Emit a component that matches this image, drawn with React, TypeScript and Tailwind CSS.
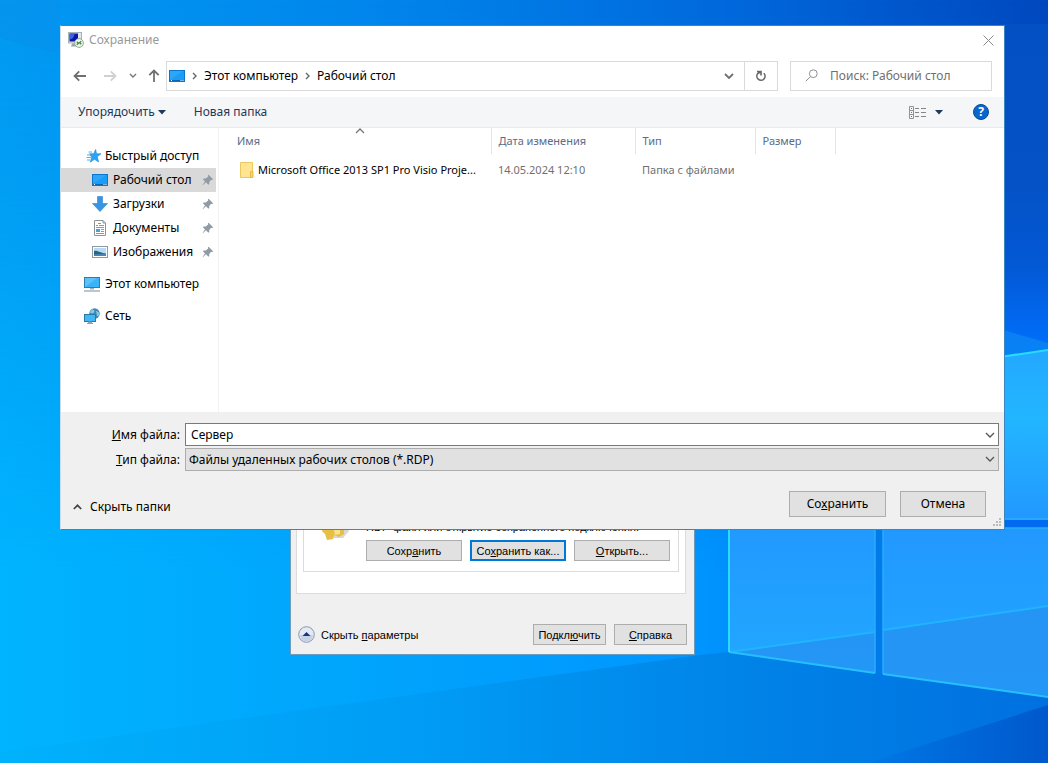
import React, { useState } from "react";

type IconProps = { className?: string };

function Wallpaper() {
  return (
    <svg className="absolute inset-0 h-full w-full" viewBox="0 0 1048 763" preserveAspectRatio="none" aria-hidden="true">
      <defs>
        <linearGradient id="sky" x1="0" y1="0" x2="1" y2="0">
          <stop offset="0" stopColor="#0299f2" />
          <stop offset="0.35" stopColor="#0086ec" />
          <stop offset="0.7" stopColor="#0068dc" />
          <stop offset="1" stopColor="#0048be" />
        </linearGradient>
        <linearGradient id="floor" x1="0" y1="0" x2="1" y2="0">
          <stop offset="0" stopColor="#00b4ff" />
          <stop offset="0.35" stopColor="#00a4fc" />
          <stop offset="0.66" stopColor="#0096ff" />
          <stop offset="0.85" stopColor="#0078f0" />
          <stop offset="1" stopColor="#0064e6" />
        </linearGradient>
        <linearGradient id="fade" x1="0" y1="0" x2="0" y2="1">
          <stop offset="0" stopColor="#000" />
          <stop offset="0.25" stopColor="#333" />
          <stop offset="0.75" stopColor="#fff" />
        </linearGradient>
        <mask id="lower"><rect width="1048" height="763" fill="url(#fade)" /></mask>
        <linearGradient id="edge" x1="0" y1="0" x2="0" y2="1">
          <stop offset="0" stopColor="#034fc4" />
          <stop offset="0.5" stopColor="#0452c6" />
          <stop offset="0.75" stopColor="#0358d4" />
          <stop offset="1" stopColor="#006efa" />
        </linearGradient>
        <linearGradient id="ray" x1="0" y1="0" x2="0" y2="1">
          <stop offset="0" stopColor="#0880f4" />
          <stop offset="1" stopColor="#0a8cfc" />
        </linearGradient>
        <linearGradient id="beam" x1="0" y1="0" x2="1" y2="0">
          <stop offset="0" stopColor="#00b2fc" />
          <stop offset="0.4" stopColor="#009cf5" />
          <stop offset="0.7" stopColor="#0084e8" />
          <stop offset="1" stopColor="#0070e0" />
        </linearGradient>
        <linearGradient id="paneTop" x1="0" y1="0" x2="0" y2="1">
          <stop offset="0" stopColor="#23a8ff" />
          <stop offset="0.4" stopColor="#22b6ff" />
          <stop offset="1" stopColor="#2298ff" />
        </linearGradient>
        <linearGradient id="paneLow" x1="0" y1="0" x2="0" y2="1">
          <stop offset="0" stopColor="#2298ff" />
          <stop offset="1" stopColor="#21a8ff" />
        </linearGradient>
        <linearGradient id="corner" x1="0" y1="0" x2="1" y2="0">
          <stop offset="0" stopColor="#0078e6" />
          <stop offset="1" stopColor="#0058cc" />
        </linearGradient>
      </defs>
      <rect width="1048" height="763" fill="url(#sky)" />
      <rect width="1048" height="763" fill="url(#floor)" mask="url(#lower)" />
      <rect x="1000" y="24" width="48" height="320" fill="url(#edge)" />
      <path d="M1000 329 L1048 343 V530 H1000Z" fill="url(#ray)" />
      <path d="M0 38 L60 54 V0 H0Z" fill="#0790ec" opacity="0.5" />
      <path d="M0 752 L700 655 L729 652 L1048 698 V763 H0Z" fill="url(#beam)" />
      <path d="M868 763 L1048 705 V763Z" fill="url(#corner)" />
      <path d="M875 380 L1000 357 L1048 350 V520 H875Z" fill="url(#paneTop)" />
      <rect x="875" y="520" width="173" height="8" fill="#006af0" />
      <path d="M729 520 H875 V673 L729 652Z" fill="url(#paneLow)" />
      <path d="M883 528 H1048 V697 L883 674Z" fill="url(#paneLow)" />
      <path d="M729 652 L875 632 V673Z M883 630 L1048 606 V697 L883 674Z" fill="#2590f2" opacity="0.75" />
      <path d="M875 528 H883 V674 L875 673Z" fill="#007be9" />
      <path d="M729 652 L875 632 M883 630 L1048 606" stroke="#20b4ff" strokeWidth="2" fill="none" />
      <path d="M875 528 V673 M883 674 V528 H1048 M1000 519 H1048" stroke="#28adff" strokeWidth="1.5" fill="none" />
      <path d="M729 652 L875 673 M883 674 L1048 697" stroke="#25c0ff" strokeWidth="2" fill="none" />
      <path d="M729 520 V652 M1000 357 L1048 350" stroke="#28dcff" strokeWidth="2" fill="none" />
    </svg>
  );
}

function RdpIcon() {
  return (
    <svg width="16" height="16" viewBox="0 0 16 16" aria-hidden="true">
      <path d="M4 11.500h5l1 3H3z" fill="#9aa4ae" />
      <rect x="0.5" y="0.5" width="13" height="10.5" fill="#dfe5ea" stroke="#a9b2ba" />
      <rect x="1.5" y="1.5" width="8.5" height="8" fill="#0a16a8" />
      <path d="M1.5 1.5h5c0 3-2 6-5 6z" fill="#3f62d8" />
      <circle cx="11" cy="11" r="4.4" fill="#f1f5ef" stroke="#98a19a" />
      <path d="M8.700 9.800l1.800 1.500-1.800 1.500M13.300 9.200l-1.800 1.500 1.800 1.500" fill="none" stroke="#2c962c" strokeWidth="1.3" />
    </svg>
  );
}

function DesktopIcon() {
  return (
    <svg width="16" height="12" viewBox="0 0 16 12" aria-hidden="true">
      <rect x="0.5" y="0.5" width="15" height="11" fill="#1b9cf5" stroke="#0a77cf" />
      <path d="M1 10V1h13z" fill="#3cacf8" opacity="0.6" />
      <path d="M1 10.5h14" stroke="#0767b4" />
      <path d="M2 10.5h1M11.5 10.5h1M13.5 10.5h1" stroke="#fff" />
    </svg>
  );
}

function StarIcon() {
  return (
    <svg width="16" height="16" viewBox="0 0 16 16" aria-hidden="true">
      <path d="M9.600 1.500l1 4.200 4.400.1-3.700 3 1.300 5.200-4.100-2.700-4.300 2.900 1.500-5L3.500 5.800l4.200-.1z" fill="#2ba3f2" stroke="#1b8bd8" strokeWidth="0.6" />
      <path d="M2.500 4h3.500M1 7h4M.5 9.500h4.500M1 12h3" stroke="#50b1ed" strokeWidth="1" />
    </svg>
  );
}

function DownloadIcon() {
  return (
    <svg width="16" height="16" viewBox="0 0 16 16" aria-hidden="true">
      <path d="M5.5.5h5v7h5L8 15.5.5 7.500h5z" fill="#3795e5" stroke="#2b80ca" strokeWidth="0.6" />
    </svg>
  );
}

function DocumentIcon() {
  return (
    <svg width="16" height="16" viewBox="0 0 16 16" aria-hidden="true">
      <path d="M2.500.5h8.500l2.500 2.500v12.500h-11z" fill="#fff" stroke="#8b9298" />
      <path d="M11 .5V3h2.500" fill="none" stroke="#8b9298" />
      <path d="M6 3.500h3M4 5.500h2M7 5.500h5M4 7.500h8M9 9.500h3M9 11.500h3M4 13.500h8" stroke="#5aa5d8" />
      <rect x="4" y="9" width="4" height="3" fill="#4a9fd8" />
    </svg>
  );
}

function PictureIcon() {
  return (
    <svg width="16" height="12" viewBox="0 0 16 12" aria-hidden="true">
      <rect x="0.5" y="0.5" width="15" height="11" fill="#fff" stroke="#929a9f" />
      <rect x="2" y="2" width="12" height="8" fill="#b4dbf7" />
      <path d="M2 5c3-1 5 1.500 12 2.500V10H2z" fill="#2f6671" />
      <path d="M2 8.500c4-1 8-.5 12-.5v2H2z" fill="#4384bf" />
    </svg>
  );
}

function ComputerIcon() {
  return (
    <svg width="16" height="16" viewBox="0 0 16 16" aria-hidden="true">
      <rect x="0.5" y="1.500" width="15" height="10" fill="#39b5f7" stroke="#2b7fae" />
      <path d="M1 11V2h12z" fill="#73cdfb" opacity="0.6" />
      <path d="M6 12h4v1.500H6z" fill="#9eb0bd" />
      <path d="M0 15h16" stroke="#8da1b0" strokeWidth="1.200" />
    </svg>
  );
}

function NetworkIcon() {
  return (
    <svg width="16" height="16" viewBox="0 0 16 16" aria-hidden="true">
      <circle cx="10.500" cy="5.500" r="5.200" fill="#3f88b4" />
      <path d="M8 1c3 1 3 3 1.500 4S6 5 6 4zM12 2.500l3 2v3l-2 .5z" fill="#8cc6df" />
      <rect x="0.500" y="6.500" width="11" height="7" fill="#43b7f5" stroke="#257ba9" />
      <path d="M4.500 14h3v1h-3zM3 15.500h6" stroke="#8fa3b0" fill="#8fa3b0" />
    </svg>
  );
}

function PinIcon() {
  return (
    <svg width="12" height="12" viewBox="0 0 12 12" aria-hidden="true">
      <path d="M6.500.8l4.700 4.400-1 .8-1-.2-2 2.300.1 2-.9.700-2.400-2.500L.8 11.200l-.3-.3 2.500-3.300L.9 5.300l.8-.9 2 .2 2.500-2-.4-1z" fill="#919ba4" />
    </svg>
  );
}

function FolderIcon() {
  return (
    <svg width="14" height="16" viewBox="0 0 14 16" aria-hidden="true">
      <path d="M.5.5h12v15H.5z" fill="#ffe591" stroke="#ecc95e" />
      <path d="M10.500 9.500h2.500v6h-2.500z" fill="#fbd768" stroke="#e4b94a" />
    </svg>
  );
}

function Chevron({ className = "" }: IconProps) {
  return (
    <svg className={className} width="10" height="6" viewBox="0 0 10 6" fill="none" stroke="currentColor" aria-hidden="true">
      <path d="M1 1l4 4 4-4" strokeWidth="1.300" />
    </svg>
  );
}

function Arrow({ className = "" }: IconProps) {
  return (
    <svg className={className} width="14" height="12" viewBox="0 0 14 12" fill="none" stroke="currentColor" strokeWidth="1.800" aria-hidden="true">
      <path d="M13 6H2M6.200 1.300L1.500 6l4.700 4.700" />
    </svg>
  );
}

function Crumb() {
  return (
    <svg width="5" height="8" viewBox="0 0 5 8" fill="none" stroke="#666" strokeWidth="1.400" aria-hidden="true">
      <path d="M1 1l3 3-3 3" />
    </svg>
  );
}

function Triangle() {
  return (
    <svg width="8" height="5" viewBox="0 0 8 5" aria-hidden="true">
      <path d="M0 0h8L4 4.500z" fill="#1e395b" />
    </svg>
  );
}

const places = [
  { name: "Рабочий стол", icon: <DesktopIcon /> },
  { name: "Загрузки", icon: <DownloadIcon /> },
  { name: "Документы", icon: <DocumentIcon /> },
  { name: "Изображения", icon: <PictureIcon /> },
];

function Sidebar() {
  const [active, setActive] = useState("Рабочий стол");
  return (
    <nav className="w-[158px] shrink-0 border-r border-[#f2f2f2] pt-4 pr-0.5" aria-label="Папки">
      <button type="button" className="flex h-6 w-full items-center gap-[3px] pl-[25px] whitespace-nowrap">
        <StarIcon />Быстрый доступ
      </button>
      {places.map((place) => (
        <button
          key={place.name}
          type="button"
          onClick={() => setActive(place.name)}
          className={
            place.name === active
              ? "flex h-6 w-full items-center gap-[5px] bg-[#d9d9d9] pr-0.5 pl-[31px]"
              : "flex h-6 w-full items-center gap-[5px] pr-0.5 pl-[31px]"
          }
        >
          {place.icon}
          <span className="flex-1 text-left whitespace-nowrap">{place.name}</span>
          <PinIcon />
        </button>
      ))}
      <button type="button" className="mt-2 flex h-6 w-full items-center gap-[5px] pl-[23px] whitespace-nowrap">
        <ComputerIcon />Этот компьютер
      </button>
      <button type="button" className="mt-2 flex h-6 w-full items-center gap-[5px] pl-[23px]">
        <NetworkIcon />Сеть
      </button>
    </nav>
  );
}

function FileTable() {
  return (
    <div className="min-w-0 flex-1">
      <table className="w-full table-fixed text-left text-[11px]">
        <colgroup>
          <col className="w-[272px]" />
          <col className="w-[144px]" />
          <col className="w-[120px]" />
          <col className="w-[80px]" />
          <col />
        </colgroup>
        <thead className="text-[#5a6b87]">
          <tr className="h-[26px]">
            <th className="relative border-r border-[#e5e5e5] pl-[18px] font-normal">
              Имя
              <Chevron className="absolute top-0 left-1/2 rotate-180 text-[#777]" />
            </th>
            <th className="border-r border-[#e5e5e5] pl-[7px] font-normal">Дата изменения</th>
            <th className="border-r border-[#e5e5e5] pl-[7px] font-normal">Тип</th>
            <th className="border-r border-[#e5e5e5] pl-[7px] font-normal">Размер</th>
            <td />
          </tr>
        </thead>
        <tbody className="text-[#707070]">
          <tr className="h-8">
            <td className="pr-2 pl-[21px] text-black">
              <div className="flex items-center gap-1">
                <span className="shrink-0"><FolderIcon /></span>
                <span className="whitespace-nowrap">Microsoft Office 2013 SP1 Pro Visio Proje...</span>
              </div>
            </td>
            <td className="pl-[7px]">14.05.2024 12:10</td>
            <td className="pl-[7px] whitespace-nowrap">Папка с файлами</td>
            <td />
            <td />
          </tr>
        </tbody>
      </table>
    </div>
  );
}

function SaveDialog() {
  const [fileName, setFileName] = useState("Сервер");
  return (
    <section
      aria-label="Сохранение"
      className="absolute top-[25px] right-[43px] left-[60px] border border-[#3a86c0] border-l-[#c8dcec] bg-white font-['Noto_Sans','Open_Sans',sans-serif] text-[12px] leading-4 text-black"
    >
      <header className="flex h-7 items-center gap-[5px] pr-2.5 pl-[7px]">
        <RdpIcon />
        <h1 className="flex-1 text-[#999]">Сохранение</h1>
        <button type="button" aria-label="Закрыть">
          <svg width="11" height="11" viewBox="0 0 11 11" stroke="#888" aria-hidden="true">
            <path d="M.5.5l10 10M10.500.5l-10 10" />
          </svg>
        </button>
      </header>

      <div className="flex h-[43px] items-center pr-3 pl-3">
        <div className="flex w-[93px] items-center">
          <button type="button" aria-label="Назад"><Arrow className="text-[#707070]" /></button>
          <button type="button" aria-label="Вперёд" className="ml-4"><Arrow className="rotate-180 text-[#d0d0d0]" /></button>
          <button type="button" aria-label="Последние расположения" className="ml-3">
            <svg width="8" height="5" viewBox="0 0 8 5" fill="none" stroke="#777" strokeWidth="1.400" aria-hidden="true"><path d="M1 1l3 3 3-3" /></svg>
          </button>
          <button type="button" aria-label="Вверх" className="ml-2.5"><Arrow className="rotate-90 text-[#707070]" /></button>
        </div>
        <div className="flex h-[30px] flex-1 border border-[#d9d9d9]">
          <div className="flex flex-1 items-center gap-[7px] pr-2.5 pl-0.5">
            <DesktopIcon />
            <Crumb />
            <button type="button">Этот компьютер</button>
            <Crumb />
            <button type="button">Рабочий стол</button>
            <button type="button" aria-label="Предыдущие расположения" className="ml-auto">
              <svg width="10" height="6" viewBox="0 0 10 6" fill="none" stroke="#707070" strokeWidth="1.800" aria-hidden="true"><path d="M1 1l4 4 4-4" /></svg>
            </button>
          </div>
          <button type="button" aria-label="Обновить" className="flex w-[33px] items-center justify-center border-l border-[#d9d9d9]">
            <svg width="12" height="12" viewBox="0 0 12 12" fill="none" stroke="#686868" strokeWidth="1.600" aria-hidden="true">
              <path d="M2 1.500h4v4M8.800 3.200a4.100 4.100 0 1 1-6 .3L5.600 2" />
            </svg>
          </button>
        </div>
        <label className="ml-3 flex h-[30px] w-[202px] items-center gap-3 border border-[#d9d9d9] pl-3.5">
          <svg className="shrink-0" width="13" height="13" viewBox="0 0 13 13" fill="none" stroke="#909090" aria-hidden="true">
            <circle cx="8.300" cy="4.700" r="3.900" />
            <path d="M5.500 7.500L.8 12.200" />
          </svg>
          <input aria-label="Поиск" placeholder="Поиск: Рабочий стол" className="w-full min-w-0 outline-none placeholder:text-[#707070]" />
        </label>
      </div>

      <div className="flex h-[31px] items-center border-b border-[#e8eaec] bg-[#f5f6f7] pr-[15px] pl-[17px] text-[#1e395b]">
        <button type="button" className="flex items-center gap-[3px]">Упорядочить<Triangle /></button>
        <button type="button" className="ml-7">Новая папка</button>
        <button type="button" aria-label="Вид" className="ml-auto flex items-center gap-[9px]">
          <svg width="17" height="13" viewBox="0 0 17 13" fill="none" aria-hidden="true">
            <path d="M.5.500h4v12h-4zM.5 4.500h4M.5 8.500h4" stroke="#929292" />
            <path d="M6 2.500h4M12 2.500h5M6 6.500h4M12 6.500h5M6 10.500h4M12 10.500h5" stroke="#858585" />
            <path d="M2 2.500h1" stroke="#777" />
            <path d="M2 6.500h1" stroke="#3888cc" />
            <path d="M2 10.500h1" stroke="#db4343" />
          </svg>
          <Triangle />
        </button>
        <button type="button" aria-label="Справка" className="ml-[30px] flex size-4 items-center justify-center rounded-full border border-[#084b98] bg-[#0866cc] text-[12px] leading-none font-bold text-white">?</button>
      </div>

      <div className="flex min-h-[284px]">
        <Sidebar />
        <FileTable />
      </div>

      <footer className="relative bg-[#f0f0f0] pt-[11px] pr-[5px] pb-3">
        <div className="grid grid-cols-[119px_1fr] items-center gap-x-[5px] gap-y-0.5">
          <label htmlFor="file-name" className="text-right"><u>И</u>мя файла:</label>
          <div className="flex h-[23px] items-center border border-[#7a7a7a] bg-white pr-[3px] pl-[5px]">
            <input id="file-name" value={fileName} onChange={(e) => setFileName(e.target.value)} className="min-w-0 flex-1 outline-none" />
            <button type="button" aria-label="Показать имена"><Chevron className="text-[#555]" /></button>
          </div>
          <label htmlFor="file-type" className="text-right"><u>Т</u>ип файла:</label>
          <div className="relative flex">
            <select id="file-type" className="h-[23px] w-full appearance-none border border-[#adadad] bg-[#e1e1e1] pl-[3px]">
              <option>Файлы удаленных рабочих столов (*.RDP)</option>
            </select>
            <Chevron className="pointer-events-none absolute top-2 right-1 text-[#555]" />
          </div>
        </div>
        <div className="mt-5 flex items-start pr-[13px] pl-3">
          <button type="button" className="mt-2 flex items-center gap-2">
            <svg width="9" height="6" viewBox="0 0 9 6" fill="none" stroke="#444" strokeWidth="1.700" aria-hidden="true"><path d="M.8 5l3.700-3.700L8.200 5" /></svg>
            Скрыть папки
          </button>
          <button type="button" className="ml-auto h-[26px] w-[97px] border border-[#adadad] bg-[#e1e1e1]">Со<u>х</u>ранить</button>
          <button type="button" className="ml-3.5 h-[26px] w-[86px] border border-[#adadad] bg-[#e1e1e1]">Отмена</button>
        </div>
        <svg className="absolute right-0.5 bottom-0.5" width="9" height="9" viewBox="0 0 9 9" fill="#bbb" aria-hidden="true">
          <path d="M6 0h2v2H6zM3 3h2v2H3zM6 3h2v2H6zM0 6h2v2H0zM3 6h2v2H3zM6 6h2v2H6z" />
        </svg>
      </footer>
    </section>
  );
}

function ConnectionWindow() {
  return (
    <section
      aria-label="Параметры подключения"
      className="absolute top-[500px] left-[290px] w-[405px] border border-[#6f9bbd] bg-[#f0f0f0] px-[5px] pb-[9px] font-['Liberation_Sans',Arial,sans-serif] text-[11px] leading-4 text-black"
    >
      <div className="mr-[3px] border border-t-0 border-[#dcdcdc] bg-white px-1.5 pb-[21px]">
        <div className="flex border border-t-0 border-[#dcdcdc] pt-[18px] pr-2 pb-2.5 pl-[18px]">
          <svg width="28" height="22" viewBox="0 0 28 22" aria-hidden="true">
            <path d="M8 8h17l2 4-6 7H8z" fill="#c8c8c8" opacity="0.700" />
            <path d="M0 0h22v15l-5 3-5-2-1 4-6 1-2-6-3-3z" fill="#e8bf45" />
            <path d="M10 2h8v13l-5 1z" fill="#f8e28d" />
          </svg>
          <div className="ml-4 flex-1">
            <p className="mb-[5px] whitespace-nowrap">RDP-файл или открытие сохраненного подключения.</p>
            <div className="flex justify-between">
              <button type="button" className="h-[21px] w-24 border border-[#adadad] bg-[#e1e1e1]">Сохр<u>а</u>нить</button>
              <button type="button" className="h-[21px] w-24 border-2 border-[#0078d7] bg-[#e1e1e1] whitespace-nowrap">Со<u>х</u>ранить как...</button>
              <button type="button" className="h-[21px] w-24 border border-[#adadad] bg-[#e1e1e1]"><u>О</u>ткрыть...</button>
            </div>
          </div>
        </div>
      </div>
      <div className="mt-[30px] flex items-center gap-2 pr-0.5 pl-0.5">
        <button type="button" className="flex items-center gap-1.5">
          <svg width="17" height="17" viewBox="0 0 17 17" aria-hidden="true">
            <circle cx="8.500" cy="8.500" r="7.800" fill="#e5eaf2" stroke="#8795b5" />
            <path d="M2 9a6.500 6.500 0 0 0 13 0z" fill="#c7d2e3" />
            <path d="M4.500 10L8.500 6l4 4z" fill="#1a3485" />
          </svg>
          <span>Скрыть <u>п</u>араметры</span>
        </button>
        <button type="button" className="ml-auto h-[21px] w-[73px] border border-[#adadad] bg-[#e1e1e1]">Подкл<u>ю</u>чить</button>
        <button type="button" className="h-[21px] w-[73px] border border-[#adadad] bg-[#e1e1e1]"><u>С</u>правка</button>
      </div>
    </section>
  );
}

export default function App() {
  return (
    <main className="relative min-h-screen overflow-hidden bg-[#0090f0]">
      <Wallpaper />
      <ConnectionWindow />
      <SaveDialog />
    </main>
  );
}
